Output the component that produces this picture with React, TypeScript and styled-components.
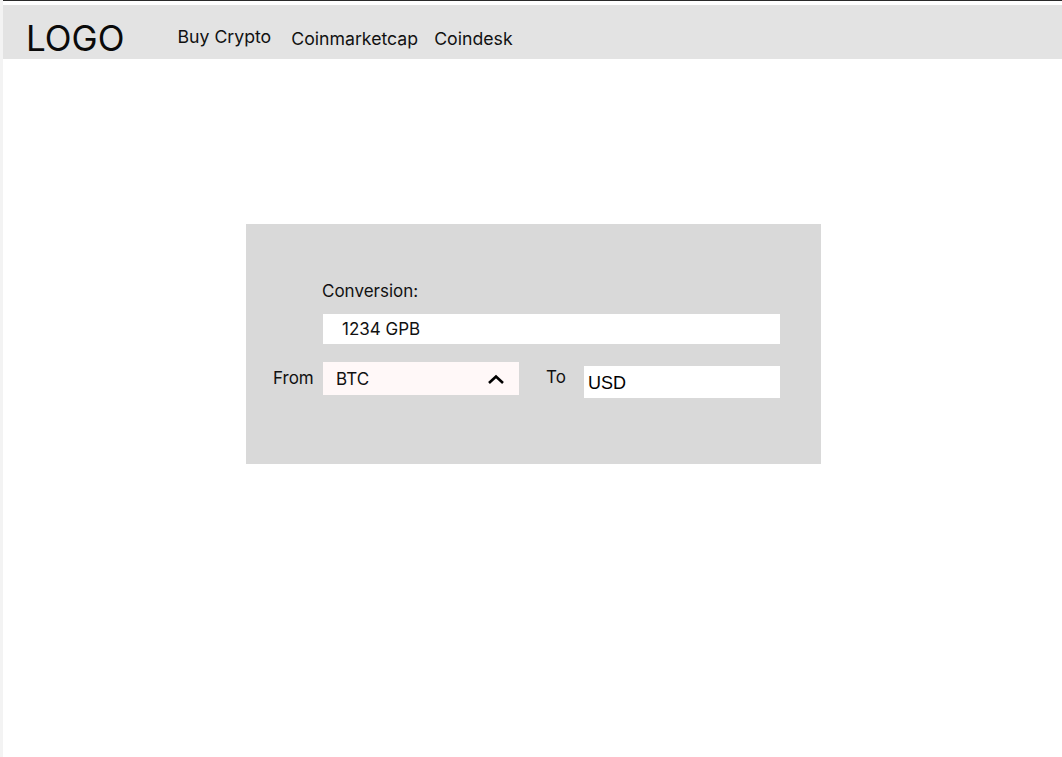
import React from "react";
import styled, { createGlobalStyle } from "styled-components";

const Global = createGlobalStyle`
  html, body { margin: 0; padding: 0; }
  body {
    background: #f3f3f3;
    font-family: Inter, "Noto Sans", sans-serif;
    color: #111;
  }
`;

const Frame = styled.div`
  min-height: 757px;
  border-top: 1px solid #2a2a2a;
  margin-left: 3px;
  background: #ffffff;
  padding-top: 4px;
  box-sizing: border-box;
`;

const Header = styled.header`
  height: 54px;
  background: #e3e3e3;
  display: flex;
  align-items: center;
  padding: 10px 0 0 23px;
  box-sizing: border-box;
`;

const Logo = styled.div`
  font-size: 35px;
  font-weight: 400;
  color: #0a0a0a;
  line-height: 1;
  margin-right: 53px;
  margin-top: 2px;
`;

const Nav = styled.nav`
  display: flex;
  align-items: center;
`;

const NavLink = styled.a<{ $shift?: number; $gap?: number }>`
  font-size: 17.7px;
  color: #111;
  text-decoration: none;
  position: relative;
  top: ${(p) => p.$shift ?? 0}px;
  margin-left: ${(p) => p.$gap ?? 0}px;
`;

const Main = styled.main`
  display: flex;
  justify-content: flex-start;
  padding: 165px 0 0 243px;
`;

const Panel = styled.section`
  width: 575px;
  height: 240px;
  background: #d9d9d9;
  box-sizing: border-box;
  padding: 57px 0 0 27px;
  display: grid;
  grid-template-columns: 50px 457px;
  grid-template-rows: auto auto auto;
  align-content: start;
`;

const Label = styled.div`
  font-size: 17px;
  line-height: 20px;
  color: #111;
`;

const ConvLabel = styled(Label)`
  grid-column: 2;
  margin-left: -1px;
`;

const AmountInput = styled.div`
  grid-column: 2;
  margin-top: 13px;
  height: 30px;
  background: #ffffff;
  display: flex;
  align-items: center;
  padding-left: 19px;
  font-size: 17px;
  color: #111;
`;

const Row = styled.div`
  grid-column: 1 / span 2;
  display: grid;
  grid-template-columns: 50px 196px 65px 196px;
  margin-top: 18px;
  align-items: start;
`;

const RowLabel = styled(Label)`
  padding-top: 6px;
`;

const Select = styled.div`
  height: 33px;
  background: #fff8f8;
  display: flex;
  align-items: center;
  justify-content: space-between;
  padding: 0 14px 0 13px;
  font-size: 17px;
  color: #111;
  box-sizing: border-box;
`;

const ToLabel = styled(RowLabel)`
  padding-left: 27px;
  padding-top: 5px;
`;

const ToInput = styled.div`
  margin-top: 4px;
  height: 32px;
  background: #ffffff;
  display: flex;
  align-items: center;
  padding-left: 4px;
  padding-top: 3px;
  box-sizing: border-box;
  font-family: "Liberation Sans", Arial, sans-serif;
  font-size: 18px;
  color: #000;
`;

const Chevron = () => (
  <svg width="18" height="12" viewBox="0 0 18 12" aria-hidden>
    <path d="M2 10 L9 3.5 L16 10" fill="none" stroke="#000" strokeWidth="2.6" strokeLinecap="butt" strokeLinejoin="miter" />
  </svg>
);

export default function App() {
  return (
    <>
      <Global />
      <Frame>
        <Header>
          <Logo>LOGO</Logo>
          <Nav>
            <NavLink href="#" $shift={-1}>Buy Crypto</NavLink>
            <NavLink href="#" $shift={1} $gap={20}>Coinmarketcap</NavLink>
            <NavLink href="#" $shift={1} $gap={16}>Coindesk</NavLink>
          </Nav>
        </Header>
        <Main>
          <Panel>
            <ConvLabel>Conversion:</ConvLabel>
            <AmountInput>1234 GPB</AmountInput>
            <Row>
              <RowLabel>From</RowLabel>
              <Select>
                <span>BTC</span>
                <Chevron />
              </Select>
              <ToLabel>To</ToLabel>
              <ToInput>USD</ToInput>
            </Row>
          </Panel>
        </Main>
      </Frame>
    </>
  );
}
